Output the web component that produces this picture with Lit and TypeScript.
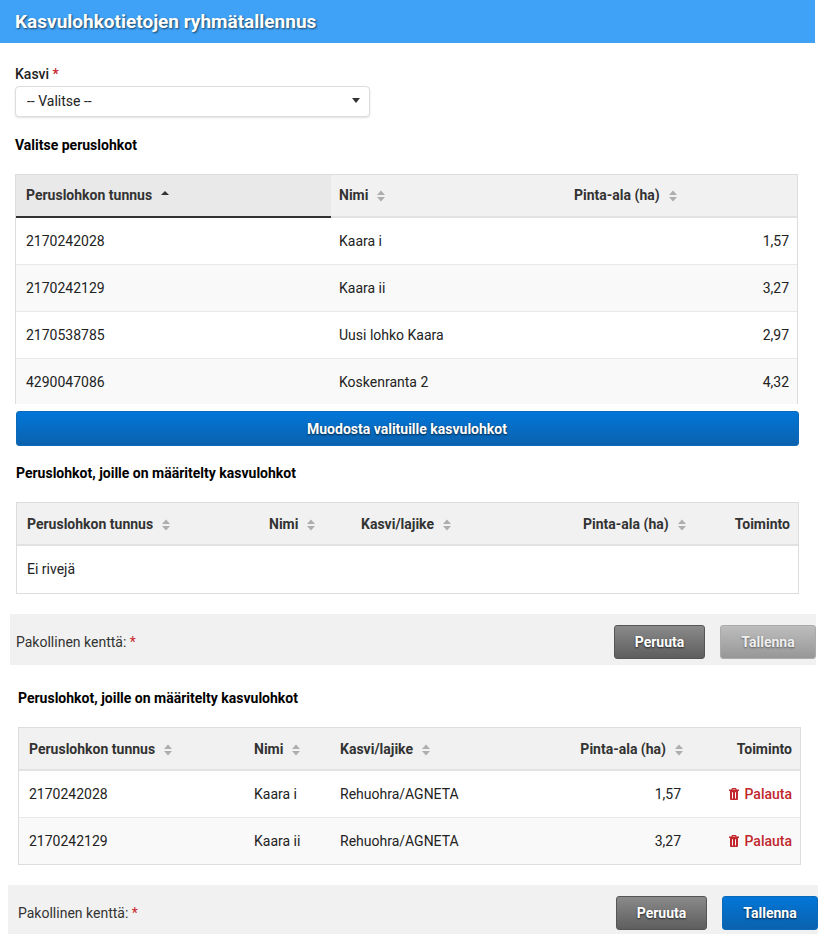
import { LitElement, html, css } from "lit";
import { customElement } from "lit/decorators.js";

const sortIcon = html`<svg class="sort" width="8" height="12" viewBox="0 0 8 12"><path d="M4 0.5 8 5H0zM0 7h8l-4 4.5z" fill="#aeaeae"/></svg>`;
const sortUp = html`<svg class="sort up" width="8" height="12" viewBox="0 0 8 12"><path d="M4 1 8 5H0z" fill="#333"/></svg>`;
const trash = html`<svg class="trash" width="10" height="12" viewBox="0 0 10 12"><path fill="#c1272d" fill-rule="evenodd" d="M3 0h4l.7 1.600H10V3H9v8a1 1 0 0 1-1 1H2a1 1 0 0 1-1-1V3H0V1.600h2.300zM3.800 1 3.500 1.600h3l-.3-.6zM3 4.200h1v6.300H3zM6 4.200h1v6.300H6z"/></svg>`;

type Row = string[];

@customElement("app-root")
export class AppRoot extends LitElement {
  static styles = css`
    :host { display: block; width: 815px; font-family: Roboto, "Liberation Sans", sans-serif; font-size: 14px; color: #333; background: #fff; padding-bottom: 11px; }
    * { box-sizing: border-box; }
    .title { height: 43px; background: #3fa2f7; color: #fff; font-size: 19px; font-weight: 700; line-height: 43px; padding-left: 15px; text-shadow: 1px 1px 2px rgba(0,0,0,.6); }
    .label { margin: 22px 0 0 15px; height: 20px; line-height: 19px; color: #222; font-weight: 500; }
    .req { color: #c9252b; }
    .select { margin: 1px 0 0 15px; width: 355px; height: 31px; border: 1px solid #ddd; border-radius: 4px; box-shadow: 0 1px 2px rgba(0,0,0,.12); background: #fff; display: flex; align-items: center; justify-content: space-between; padding: 0 9px 2px 11px; color: #222; }
    .arrow { width: 0; height: 0; border-left: 4px solid transparent; border-right: 4px solid transparent; border-top: 5px solid #333; }
    h2 { margin: 0; font-size: 14px; font-weight: 700; line-height: 20px; color: #000; }
    .h1 { margin: 18px 0 19px 15px; }
    .h2 { margin: 17px 0 19px 16px; }
    .h3 { margin: 23px 0 19px 18px; }
    .clip { margin-left: 15px; width: 783px; height: 230px; overflow: hidden; border: solid #ddd; border-width: 1px 1px 0; }
    .frame { width: 783px; border: 1px solid #ddd; }
    .f2 { margin-left: 16px; }
    .f3 { margin-left: 18px; }
    table { width: 781px; border-collapse: separate; border-spacing: 0; table-layout: fixed; }
    th { height: 43px; background: #f1f1f1; border-bottom: 2px solid #e2e2e2; text-align: left; padding: 0 8px 0 10px; font-weight: 700; white-space: nowrap; }
    .clip th { padding-bottom: 1px; }
    th.active { background: #e9e9e9; border-bottom-color: #333; }
    td { height: 47px; padding: 0 8px 1px 10px; border-bottom: 1px solid #e8e8e8; color: #222; white-space: nowrap; }
    tbody tr:last-child td { border-bottom: 0; }
    tr.short td { height: 46px; padding-bottom: 0; }
    tbody tr:nth-child(even) td { background: #f9f9f9; }
    .sort { margin-left: 9px; vertical-align: -2px; }
    .r { text-align: right; }
    td.pr { padding-right: 10px; }
    .clip .pl8 { padding-left: 8px; }
    td.act { color: #c1272d; font-weight: 500; }
    .trash { vertical-align: -1px; margin-right: 5px; }
    th.top { vertical-align: top; padding-top: 13px; }
    .wide { display: block; margin: 7px 0 0 16px; width: 783px; height: 35px; padding-right: 1px; }
    button { border: 0; border-radius: 3px; font: 700 14px Roboto, "Liberation Sans", sans-serif; color: #fff; text-shadow: 0 1px 2px rgba(0,0,0,.7); padding: 0; }
    .blue { background: linear-gradient(#0276d8, #0b62ae); border: 1px solid #0b69b9; }
    .gray { background: linear-gradient(#8a8a8a, #5e5e5e); border: 1px solid #555; width: 91px; }
    .off { background: linear-gradient(#bdbdbd, #979797); border: 1px solid #aaa; color: #eee; width: 96px; text-shadow: 0 1px 2px rgba(0,0,0,.45); }
    .save { width: 96px; }
    .bar { height: 51px; background: #f1f1f1; display: flex; align-items: center; gap: 15px; color: #333; padding-top: 11px; padding-bottom: 6px; }
    .bar span.t { flex: 1; }
    .b1 { margin: 20px 0 0 10px; width: 806px; padding-left: 6px; }
    .b2 { margin-top: 20px; margin-left: 8px; width: 810px; height: 49px; padding-left: 10px; padding-bottom: 4px; }
    .bar button { height: 34px; }
  `;

  private rows1: Row[] = [
    ["2170242028", "Kaara i", "1,57"],
    ["2170242129", "Kaara ii", "3,27"],
    ["2170538785", "Uusi lohko Kaara", "2,97"],
    ["4290047086", "Koskenranta 2", "4,32"],
  ];
  private rows3: Row[] = [
    ["2170242028", "Kaara i", "Rehuohra/AGNETA", "1,57"],
    ["2170242129", "Kaara ii", "Rehuohra/AGNETA", "3,27"],
  ];

  private cols(w: number[]) {
    return html`<colgroup>${w.map((x) => html`<col style="width:${x}px" />`)}</colgroup>`;
  }

  private head4() {
    return html`<thead><tr>
      <th>Peruslohkon tunnus${sortIcon}</th>
      <th>Nimi${sortIcon}</th>
      <th>Kasvi/lajike${sortIcon}</th>
      <th class="r">Pinta-ala (ha)${sortIcon}</th>
      <th class="r top">Toiminto</th>
    </tr></thead>`;
  }

  render() {
    return html`
      <div class="title">Kasvulohkotietojen ryhmätallennus</div>
      <div class="label">Kasvi <span class="req">*</span></div>
      <div class="select"><span>-- Valitse --</span><span class="arrow"></span></div>
      <h2 class="h1">Valitse peruslohkot</h2>
      <div class="clip">
        <table>
          ${this.cols([315, 235, 231])}
          <thead><tr>
            <th class="active">Peruslohkon tunnus${sortUp}</th>
            <th class="pl8">Nimi${sortIcon}</th>
            <th class="pl8">Pinta-ala (ha)${sortIcon}</th>
          </tr></thead>
          <tbody>
            ${this.rows1.map((r) => html`<tr><td>${r[0]}</td><td class="pl8">${r[1]}</td><td class="r">${r[2]}</td></tr>`)}
          </tbody>
        </table>
      </div>
      <button class="blue wide">Muodosta valituille kasvulohkot</button>
      <h2 class="h2">Peruslohkot, joille on määritelty kasvulohkot</h2>
      <div class="frame f2">
        <table>
          ${this.cols([242, 92, 222, 120, 105])}
          ${this.head4()}
          <tbody><tr><td colspan="5">Ei rivejä</td></tr></tbody>
        </table>
      </div>
      <div class="bar b1">
        <span class="t">Pakollinen kenttä: <span class="req">*</span></span>
        <button class="gray">Peruuta</button>
        <button class="off">Tallenna</button>
      </div>
      <h2 class="h3">Peruslohkot, joille on määritelty kasvulohkot</h2>
      <div class="frame f3">
        <table>
          ${this.cols([225, 86, 240, 121, 109])}
          ${this.head4()}
          <tbody>
            ${this.rows3.map((r, i) => html`<tr class=${i === 1 ? "short" : ""}><td>${r[0]}</td><td>${r[1]}</td><td>${r[2]}</td><td class="r pr">${r[3]}</td><td class="r act">${trash}Palauta</td></tr>`)}
          </tbody>
        </table>
      </div>
      <div class="bar b2">
        <span class="t">Pakollinen kenttä: <span class="req">*</span></span>
        <button class="gray">Peruuta</button>
        <button class="blue save">Tallenna</button>
      </div>
    `;
  }
}
